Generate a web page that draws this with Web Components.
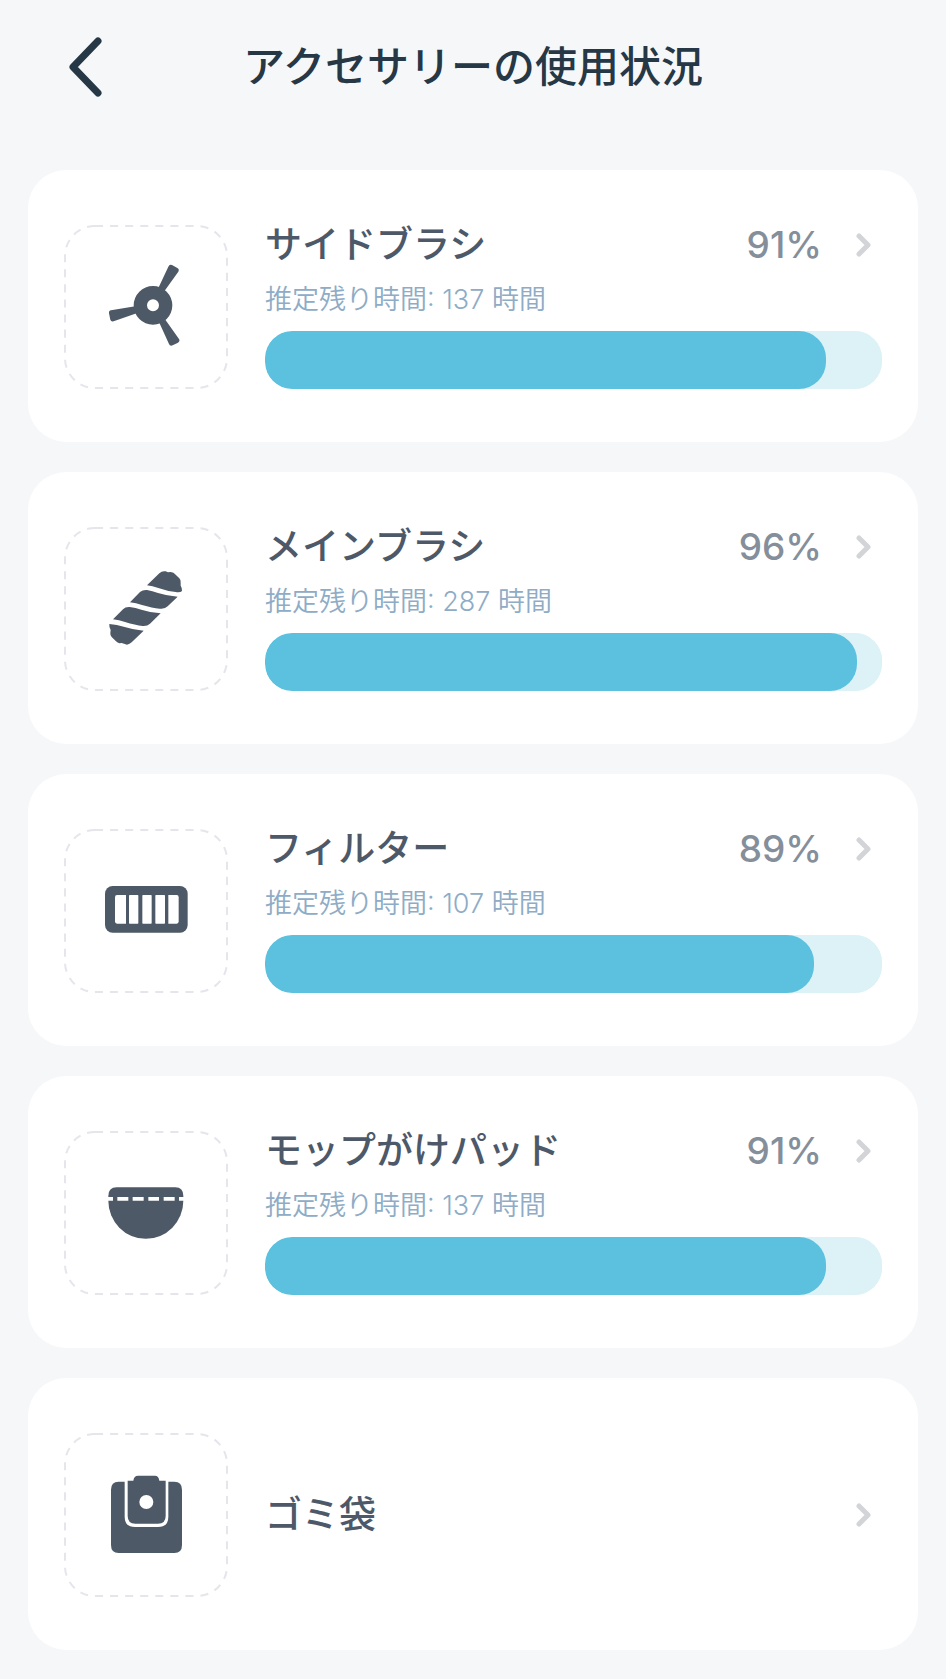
<!DOCTYPE html>
<html lang="ja">
<head>
<meta charset="utf-8">
<meta name="viewport" content="width=device-width, initial-scale=1">
<title>アクセサリーの使用状況</title>
<style>
  html { background: #f5f7f9; }
  body { margin: 0; font-family: Inter, "Noto Sans CJK JP", sans-serif; color: #4d5969; }
</style>
</head>
<body>
<accessory-page>
  <page-header slot="header">アクセサリーの使用状況</page-header>
  <accessory-card icon="side" percent="91" hours="137">サイドブラシ</accessory-card>
  <accessory-card icon="main" percent="96" hours="287">メインブラシ</accessory-card>
  <accessory-card icon="filter" percent="89" hours="107">フィルター</accessory-card>
  <accessory-card icon="mop" percent="91" hours="137">モップがけパッド</accessory-card>
  <accessory-card icon="bag">ゴミ袋</accessory-card>
</accessory-page>
<script>
const ICONS = {
  side: `<svg viewBox="132 195 492 492">
    <path d="M414 386 445 320Q448 312 456 315L472 324Q479 328 475 335L434 392ZM418 488 447 552Q450 560 458 556L474 548Q481 543 477 537L436 479ZM346 439 273 451Q266 452 267 460L271 479Q273 486 281 484L350 460Z"/>
    <path fill-rule="evenodd" d="M399 378a58 58 0 1 1 0 116a58 58 0 1 1 0-116ZM399 418a18 18 0 1 0 0 36a18 18 0 1 0 0-36Z"/></svg>`,
  main: `<svg viewBox="42 51 492 492">
    <path d="M291 226 328 190Q336 182 347 184L354 187 362 186Q371 187 377 194L388 205Q393 210 392 218L392 227Q397 234 396 243Q391 248 377 246Q350 243 325 234Q307 228 291 226Z"/>
    <path d="M240 277 270 246Q278 239 291 240Q307 243 324 249Q352 258 383 260L353 289Q345 298 329 296Q307 294 276 285Q258 279 240 277Z"/>
    <path d="M189 328 219 298Q226 290 239 291Q257 293 274 299Q302 308 332 310L300 341Q292 349 278 348Q256 345 225 336Q207 330 189 328Z"/>
    <path d="M178 342Q200 344 224 351Q252 360 281 362L245 397Q239 403 231 404L222 401 215 399 208 400Q203 399 198 394L185 381Q180 376 181 368L182 360Q177 353 178 342Z"/></svg>`,
  filter: `<svg viewBox="42 27 492 492">
    <rect x="165" y="198" width="248" height="140" rx="23"/>
    <g fill="#fff"><path d="M201 225H228V311H201Q195 311 195 304V232Q195 225 201 225Z"/>
    <rect x="237" y="225" width="28" height="86" rx="2"/><rect x="277" y="225" width="28" height="86" rx="2"/><rect x="316" y="225" width="29" height="86" rx="2"/>
    <path d="M355 225H380Q386 225 386 232V304Q386 311 380 311H355Z"/></g></svg>`,
  mop: `<svg viewBox="42 33 492 492">
    <path d="M200 202H376Q400 202 400 228V242A112 114 0 0 1 175 242V228Q175 202 200 202Z"/>
    <path fill="#fff" d="M170 231H189V242H170ZM202 231H235V242H202ZM248 231H281V242H248ZM295 231H327V242H295ZM341 231H374V242H341ZM387 231H406V242H387Z"/></svg>`,
  bag: `<svg viewBox="42 39 492 492">
    <path d="M206 185H224V290Q224 321 255 321H324Q355 321 355 290V185H373Q396 185 396 209V375Q396 399 373 399H206Q183 399 183 375V209Q183 185 206 185Z"/>
    <path fill-rule="evenodd" d="M233 182H250Q252 167 264 167H315Q326 167 328 182H347V288Q347 311 324 311H256Q233 311 233 288ZM289 225a21 21 0 1 0 0 42a21 21 0 1 0 0-42Z"/></svg>`
};

customElements.define('accessory-page', class extends HTMLElement {
  constructor() {
    super();
    this.attachShadow({ mode: 'open' }).innerHTML = `
      <style>
        :host { display: block; }
        main { display: flex; flex-direction: column; gap: 30px; padding: 36px 28px 29px; }
      </style>
      <slot name="header"></slot>
      <main><slot></slot></main>`;
  }
});

customElements.define('page-header', class extends HTMLElement {
  constructor() {
    super();
    this.attachShadow({ mode: 'open' }).innerHTML = `
      <style>
        :host { display: block; color: #263746; }
        header { display: grid; grid-template-columns: 1fr auto 1fr; align-items: center; height: 134px; padding: 0 64px; }
        button { justify-self: start; width: 44px; height: 64px; padding: 0; border: 0; background: none; color: inherit; }
        svg { display: block; }
        h1 { margin: 0; font-size: 42px; line-height: 60px; font-weight: 500; }
      </style>
      <header>
        <button type="button" aria-label="戻る">
          <svg width="44" height="64" fill="none" stroke="currentColor" stroke-width="7" stroke-linecap="round" stroke-linejoin="round"><path d="M34 6 9 32 34 58"/></svg>
        </button>
        <h1><slot></slot></h1>
      </header>`;
  }
});

customElements.define('accessory-icon', class extends HTMLElement {
  connectedCallback() {
    this.attachShadow({ mode: 'open' }).innerHTML = `
      <style>
        :host { display: grid; width: 164px; height: 164px; flex: none; }
        svg { grid-area: 1 / 1; width: 164px; height: 164px; fill: #4d5966; }
        .frame { fill: none; stroke: #e5e5ec; stroke-width: 2; stroke-dasharray: 8 7; }
      </style>
      <svg class="frame" viewBox="0 0 164 164"><rect x="1" y="1" width="162" height="162" rx="30" pathLength="593"/></svg>
      ${ICONS[this.getAttribute('name')]}`;
  }
});

customElements.define('accessory-card', class extends HTMLElement {
  connectedCallback() {
    const percent = this.getAttribute('percent');
    const hours = this.getAttribute('hours');
    this.attachShadow({ mode: 'open' }).innerHTML = `
      <style>
        :host { display: block; }
        a { display: flex; align-items: center; gap: 37px; height: 272px; box-sizing: border-box; padding: 2px 36px 0;
            border-radius: 38px; background: #fff; color: inherit; text-decoration: none; }
        .body { flex: 1; min-width: 0; }
        .top { display: flex; align-items: center; height: 40px; padding-right: 11px; }
        h2 { flex: 1; margin: 0; font-size: 37px; line-height: 40px; font-weight: 500; }
        .percent { font-size: 37px; line-height: 40px; font-weight: 500; color: #848f9b; }
        .arrow { flex: none; margin-left: 33px; }
        p { margin: 17px 0 13px; font-size: 27px; line-height: 36px; font-weight: 350; color: #8eacc6; }
        progress { display: block; width: 100%; height: 58px; border: 0; appearance: none; border-radius: 27px; background: #ddf2f7; overflow: hidden; }
        progress::-webkit-progress-bar { background: #ddf2f7; border-radius: 27px; }
        progress::-webkit-progress-value { background: #5bc1df; border-radius: 27px; }
      </style>
      <a href="#">
        <accessory-icon name="${this.getAttribute('icon')}"></accessory-icon>
        <div class="body">
          <div class="top">
            <h2><slot></slot></h2>
            ${percent ? `<span class="percent">${percent}%</span>` : ''}
            <svg class="arrow" width="16" height="28" fill="none" stroke="#d2d4d7" stroke-width="5" stroke-linecap="round" stroke-linejoin="round"><path d="M4 5 13 14 4 23"/></svg>
          </div>
          ${percent ? `<p>推定残り時間: ${hours} 時間</p>
          <progress max="100" value="${percent}" aria-label="残り"></progress>` : ''}
        </div>
      </a>`;
  }
});
</script>
</body>
</html>
